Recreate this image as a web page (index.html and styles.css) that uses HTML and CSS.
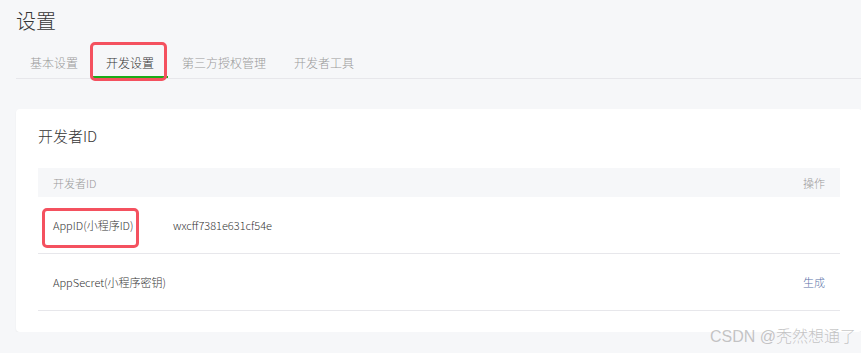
FILE: index.html
```html
<!DOCTYPE html>
<html lang="zh-CN">
<head>
  <meta charset="UTF-8">
  <meta name="viewport" content="width=device-width, initial-scale=1.0">
  <title>设置</title>
  <link rel="stylesheet" href="styles.css">
</head>
<body>
  <div class="page">
    <h2 class="page-title">设置</h2>

    <div class="tabs">
      <a class="tab">基本设置</a>
      <a class="tab active">开发设置<span class="mark mark-tab"></span></a>
      <a class="tab">第三方授权管理</a>
      <a class="tab">开发者工具</a>
    </div>

    <div class="card">
      <h3 class="card-title">开发者ID</h3>

      <table class="id-table">
        <colgroup>
          <col class="c-key">
          <col>
          <col class="c-op">
        </colgroup>
        <thead>
          <tr>
            <th class="col-key">开发者ID</th>
            <th></th>
            <th class="col-op">操作</th>
          </tr>
        </thead>
        <tbody>
          <tr>
            <td class="col-key"><span class="key-label">AppID(小程序ID)<span class="mark mark-cell"></span></span></td>
            <td>wxcff7381e631cf54e</td>
            <td class="col-op"></td>
          </tr>
          <tr>
            <td class="col-key">AppSecret(小程序密钥)</td>
            <td></td>
            <td class="col-op"><a class="link">生成</a></td>
          </tr>
        </tbody>
      </table>
    </div>
  </div>

  <div class="watermark">CSDN @秃然想通了</div>
</body>
</html>
```

FILE: styles.css
```css
body {
  margin: 0;
  background-color: #f6f7f9;
  font-family: "Noto Sans CJK SC", sans-serif;
  font-weight: 300;
  color: #353535;
  overflow: hidden;
}
.page {
  width: 846px;
  margin-left: 16px;
  padding-top: 7px;
}
.page-title {
  margin: 0;
  font-size: 20px;
  font-weight: 300;
  line-height: 28px;
  color: #353535;
}

/* tabs */
.tabs {
  display: flex;
  margin-top: 10px;
  border-bottom: 1px solid #e7e7eb;
}
.tab {
  position: relative;
  padding: 8px 14px 3px;
  font-size: 12px;
  line-height: 20px;
  color: #9a9a9a;
  border-bottom: 2px solid transparent;
  cursor: pointer;
}
.tab.active {
  color: #353535;
  border-bottom-color: #1aad19;
}

/* red annotation boxes */
.mark {
  position: absolute;
  border: 3px solid #f4515f;
  border-radius: 5px;
  pointer-events: none;
}
.mark-tab {
  top: -3px;
  left: -2px;
  right: 1px;
  bottom: -5px;
}
.mark-cell {
  top: -9px;
  left: -11px;
  right: -6px;
  bottom: -15px;
}

/* card */
.card {
  margin-top: 30px;
  padding: 16px 22px 21px;
  background-color: #fff;
  border-radius: 4px;
  box-shadow: 0 1px 2px rgba(0, 0, 0, 0.05);
}
.card-title {
  margin: 0 0 21px;
  font-size: 15px;
  font-weight: 300;
  line-height: 22px;
  color: #353535;
}

.id-table {
  width: 100%;
  table-layout: fixed;
  border-collapse: collapse;
  font-size: 11px;
  white-space: nowrap;
}
.c-key {
  width: 135px;
}
.c-op {
  width: 80px;
}
.id-table th {
  height: 29px;
  padding: 0 15px 0 0;
  background-color: #f6f7f9;
  font-weight: 300;
  text-align: left;
  color: #9a9a9a;
}
.id-table td {
  height: 56px;
  padding: 0 15px 0 0;
  border-bottom: 1px solid #e7e7eb;
  color: #353535;
}
.id-table .col-key {
  padding-left: 15px;
}
.id-table .col-op {
  text-align: right;
}
.key-label {
  position: relative;
  display: inline-block;
  line-height: 16px;
}
.id-table .link {
  color: #5b72a8;
  cursor: pointer;
}

.watermark {
  position: absolute;
  right: 5px;
  top: 326px;
  font-family: "Liberation Sans", "Noto Sans CJK SC", sans-serif;
  font-size: 16px;
  line-height: 22px;
  color: rgba(150, 150, 150, 0.55);
}
```
